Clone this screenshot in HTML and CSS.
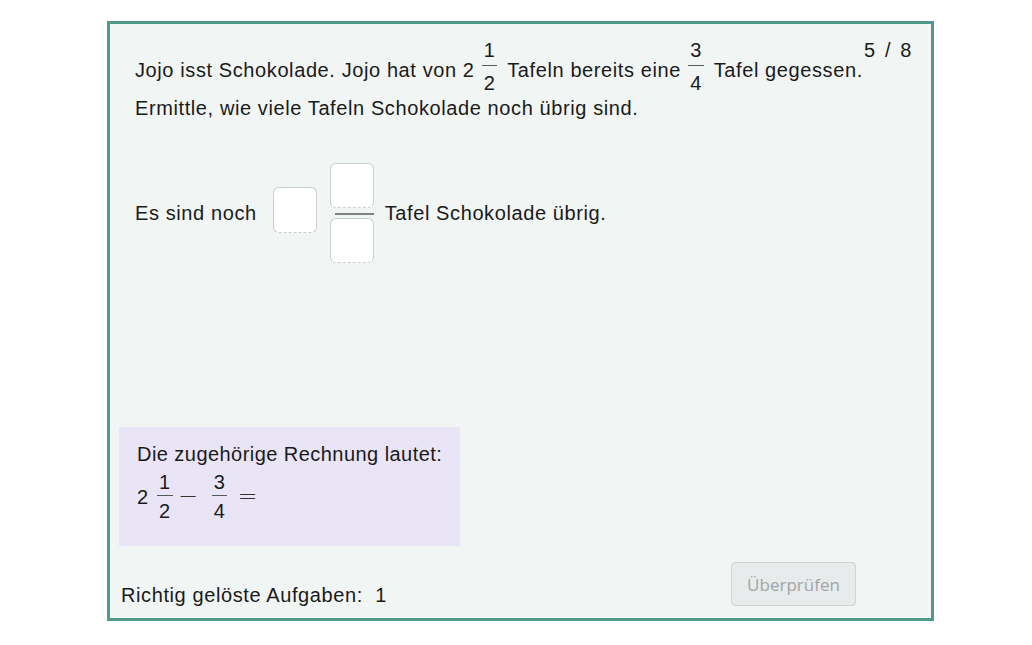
FILE: index.html
```html
<!DOCTYPE html>
<html lang="de">
<head>
<meta charset="utf-8">
<title>Schokolade</title>
<link rel="stylesheet" href="styles.css">
</head>
<body>
<div class="frame">
  <div class="counter">5 / 8</div>
  <div class="task">
    <div class="line line-first">Jojo isst Schokolade. Jojo hat von 2&nbsp;<span class="frac"><span class="num">1</span><span class="bar"></span><span class="den">2</span></span> Tafeln bereits eine <span class="frac"><span class="num">3</span><span class="bar"></span><span class="den">4</span></span> Tafel gegessen.</div>
    <div class="line line-second">Ermittle, wie viele Tafeln Schokolade noch übrig sind.</div>
  </div>
  <div class="answer">
    <span class="label">Es sind noch</span>
    <span class="box whole"></span>
    <span class="frac-input">
      <span class="box"></span>
      <span class="in-bar"></span>
      <span class="box"></span>
    </span>
    <span class="label">Tafel Schokolade übrig.</span>
  </div>
  <div class="hint">
    <div class="hint-title">Die zugehörige Rechnung lautet:</div>
    <div class="hint-math">2&nbsp;<span class="frac"><span class="num">1</span><span class="bar"></span><span class="den">2</span></span><span class="op minus">−</span><span class="frac"><span class="num">3</span><span class="bar"></span><span class="den">4</span></span><span class="op eq">=</span></div>
  </div>
  <div class="footer">
    <span class="score">Richtig gelöste Aufgaben:&nbsp; 1</span>
    <button class="check" disabled>Überprüfen</button>
  </div>
</div>
</body>
</html>
```

FILE: styles.css
```css
html, body {
  margin: 0;
  padding: 0;
  background: #ffffff;
}

body {
  font-family: "Liberation Sans", Arial, sans-serif;
  color: #1a1a1a;
  font-size: 20px;
  letter-spacing: 0.6px;
}

.frame {
  position: relative;
  box-sizing: border-box;
  margin: 21px 0 0 107px;
  width: 827px;
  height: 600px;
  border: 3px solid #4f9a8d;
  background: #f1f5f4;
  display: flex;
  flex-direction: column;
}

.counter {
  position: absolute;
  top: 15px;
  right: 19px;
  line-height: 23px;
  word-spacing: 3px;
}

.task {
  padding: 15px 0 0 25px;
}

.line {
  line-height: 23px;
}

.line-second {
  margin-top: 3px;
}

.frac {
  display: inline-flex;
  flex-direction: column;
  align-items: center;
  vertical-align: 20px;
  margin: 0 4px 0 1px;
  line-height: 22px;
}

.num, .den {
  display: block;
  padding: 0 2px;
}

.bar {
  display: block;
  width: 100%;
  height: 1px;
  background: #555a5a;
  margin: 4px 0 6px;
}

.answer {
  display: flex;
  align-items: center;
  margin-top: 43px;
  padding-left: 25px;
}

.label {
  line-height: 23px;
}

.box {
  box-sizing: border-box;
  display: block;
  width: 44px;
  height: 45px;
  background: #ffffff;
  border: 1px solid #c8cfce;
  border-bottom-style: dashed;
  border-radius: 6px;
}

.whole {
  margin: 0 13px 6px 16px;
  height: 46px;
}

.frac-input {
  display: flex;
  flex-direction: column;
  align-items: flex-end;
  margin-right: 11px;
}

.in-bar {
  display: block;
  width: 39px;
  height: 2px;
  background: #7d8383;
  margin: 5px 0 3px;
}

.hint {
  margin: auto 0 0 9px;
  width: 341px;
  height: 119px;
  box-sizing: border-box;
  background: #e9e5f6;
  padding: 13px 0 0 18px;
}

.hint-title {
  line-height: 28px;
  letter-spacing: 0.45px;
}

.hint-math {
  margin-top: 4px;
  line-height: 23px;
}

.hint-math .frac {
  vertical-align: 15px;
  margin: 0 3px 0 2px;
  line-height: 20px;
}

.hint-math .bar {
  margin: 3px 0 5px;
}

.op {
  display: inline-block;
  font-family: "DejaVu Sans", sans-serif;
  font-size: 24px;
  font-weight: 200;
  line-height: 23px;
  letter-spacing: 0;
  color: #333;
}

.minus {
  margin: 0 12px 0 2px;
}

.eq {
  margin: 0 0 0 7px;
}

.footer {
  display: flex;
  justify-content: space-between;
  align-items: flex-end;
  margin-top: 16px;
  padding: 0 75px 12px 11px;
}

.score {
  line-height: 23px;
  margin-bottom: -1px;
}

.check {
  box-sizing: border-box;
  width: 125px;
  height: 44px;
  background: #e7ebeb;
  border: 1px solid #cfd4d4;
  border-radius: 4px;
  font-family: "Open Sans", "Noto Sans", sans-serif;
  font-size: 17px;
  letter-spacing: 0;
  color: #a2a6a6;
  padding: 0;
}
```
